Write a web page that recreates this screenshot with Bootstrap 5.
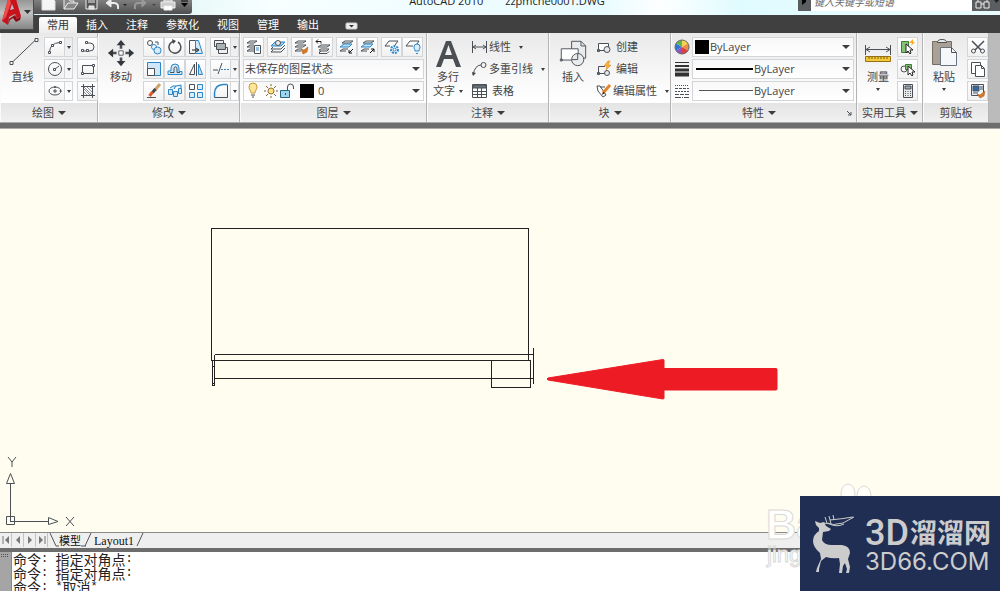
<!DOCTYPE html>
<html lang="zh-CN">
<head>
<meta charset="utf-8">
<meta name="viewport" content="width=device-width, initial-scale=1">
<title>AutoCAD 2010 zzpmche0001.DWG</title>
<link href="https://cdn.jsdelivr.net/npm/bootstrap@5.3.0/dist/css/bootstrap.min.css" rel="stylesheet">
<style>
  body { font: 11px/14px "Open Sans", "Noto Sans CJK SC", sans-serif; color: #444; background: #fff; }
  button, select, input { font: inherit; color: inherit; }
  button { border: 0; padding: 0; background: none; }
  svg { display: block; flex: none; fill: none; stroke: #4b5056; stroke-width: 1; overflow: visible; }

  /* title bar */
  .titlebar { height: 15px; background: linear-gradient(90deg, #e6f6fb, #d8f1f8 8%, #c9ecf5 12%, #eafaf9 20%, #f7ffff 27%, #e8fbff 60%, #fdffff 66%, #e0fbff 74%, #e9fdff); }
  .quickbar { height: 14px; margin-left: 33px; width: 159px; padding-left: 8px; background: linear-gradient(#808080, #4e4e4e); border-radius: 0 0 3px 0; }
  .quickbar svg { stroke: #eee; }
  .caption { height: 15px; padding-bottom: 7px; color: #222; white-space: pre; gap: 22px; }
  .searchbox { height: 11px; width: 202px; background: #5b5e60; }
  .searchbox input { width: 161px; height: 18px; border: 0; padding: 0 3px; font-size: 10px; font-style: italic; background: #fff; border-radius: 0; }
  .searchbox input::placeholder { color: #6b6b6b; opacity: 1; }
  .appmenu { left: 0; top: 0; width: 34px; height: 30px; background: linear-gradient(#969696, #c1c1c1 45%, #858585); border: solid #4c4c4c; border-width: 0 1px 1px 0; z-index: 2; }

  /* ribbon */
  .menubar { height: 18px; padding-left: 39px; background: #404040; }
  .menubar button { height: 16px; padding: 0 9px; color: #fff; }
  .menubar button.current { padding: 0 8px; color: #333; background: linear-gradient(#fff, #ececec); border-radius: 2px 2px 0 0; }
  .ribbon { height: 90px; background: linear-gradient(90deg, #999, #bbb); border-bottom: 1px solid #aaa; }
  .panel { border-right: 1px solid #b4b4b4; border-left: 1px solid #fafafa; background: linear-gradient(#e9e9e9, #fbfbfb 60%, #fff 78%, #e4e4e4 79%, #f1f1f1); }
  .panel-body { height: 70px; padding-top: 4px; }
  .panel-body.tight { padding-left: 2px; padding-right: 2px; }
  .panel-name { height: 19px; }
  .gap-row { gap: 2px; }
  .gap-tool { gap: 3px; }
  .line { height: 20px; }
  .tool { width: 21px; height: 20px; border: 1px solid #d3d6d8; background: linear-gradient(#fff, #f1f1f1); display: flex; align-items: center; justify-content: center; }
  .more { width: 8px; height: 20px; border: 1px solid #d3d6d8; border-left: 0; display: flex; align-items: center; justify-content: center; }
  .big { display: flex; flex-direction: column; align-items: center; height: 64px; }
  .big svg.art { width: 32px; height: 32px; margin-bottom: 1px; }
  .tri { display: inline-block; border: solid transparent; border-width: 4px 4px 0; border-top-color: #3c3c3c; }
  .tri-s { display: inline-block; border: solid transparent; border-width: 3px 2px 0; border-top-color: #3c3c3c; }
  .combo { height: 20px; border: 1px solid #d3d6d8; background: linear-gradient(#f8f8f8, #fff); }
  .combo select { appearance: none; border: 0; padding: 0 16px 0 1px; background: none; flex: 1; min-width: 0; height: 18px; line-height: 18px; }
  .combo .tri { margin: 0 3px 0 -11px; pointer-events: none; }
  .prop .line { gap: 2px; }
  .swatch { width: 14px; height: 14px; background: #000; }
  .prop .swatch { margin-left: 2px; }
  .divider { height: 6px; background: #6d6d6d; border-bottom: 1px solid #aaa; }

  .w-draw { width: 98px; } .w-modify { width: 142px; } .w-layer { width: 187px; } .w-note { width: 122px; }
  .w-block { width: 122px; } .w-prop { width: 186px; } .w-util { width: 66px; } .w-clip { width: 66px; }

  /* drawing area */
  .model { background: #fffdf0; min-height: 0; }
  .sheet { left: 0; top: 0; stroke: #222; }
  .ucs { left: 0; bottom: 0; }
  .layouts { height: 16px; background: #efefef; border-top: 1px solid #8a8a8a; color: #111; }
  .layouts .step { width: 12px; height: 14px; border-right: 1px solid #c4c4c4; display: flex; align-items: center; justify-content: center; }
  .layouts .step svg { fill: #777; stroke: #777; }
  .layouts .sheet-name { font-family: "Liberation Serif", serif; font-size: 12px; }
  .dock-edge { height: 4px; background: #6d6d6d; }
  .console { height: 39px; background: #fff; }
  .console .grip { width: 12px; background: #a5a5a5; border-right: 1px solid #888; }
  .console .log { font: 14px/14px "Noto Sans CJK SC", sans-serif; color: #222; padding-left: 1px; }
  .console .entry { display: flex; height: 14px; }
  .console .mono { font: 12px/14px "Liberation Mono", monospace; white-space: pre; }

  /* watermark and brand */
  .ghost { right: 144px; bottom: 12px; width: 90px; height: 100px; }
  .brand { right: 0; bottom: 0; width: 200px; height: 95px; background: #202e54; color: #ccc; padding: 18px 11px 0 11px; }
  .brand .deer { fill: #ccc; stroke: #ccc; }
  .brand .row-a { height: 34px; font: 700 27px/36px "Noto Sans CJK SC", sans-serif; }
  .brand .row-a .latin { font: 500 36px/38px Roboto, sans-serif; margin-right: 1px; }
  .brand .row-b { font: 24px/28px Inter, sans-serif; }
</style>
</head>
<body class="vh-100 d-flex flex-column overflow-hidden position-relative">

<button class="appmenu position-absolute" aria-label="应用程序菜单">
  <svg width="33" height="29" viewBox="0 0 33 29" style="stroke:none">
    <path d="M2 21 9-4h6l6 20-4 3-2-5-6 3-1 8z" fill="#c9131c"/><path d="M2 21 9-4l2 7-5 14z" fill="#f04b4b"/>
    <path d="M10 10l2-6 2 5z" fill="#bbb"/><path d="M2 21l6 4 1-6 6-4 2 4 4-3-1 4-4 2-3-4-3 2-2 5z" fill="#8e0c12"/>
    <path d="M24 10h7l-3.500 4z" fill="#333"/>
  </svg>
</button>

<header class="titlebar d-flex justify-content-between align-items-start overflow-hidden flex-shrink-0">
  <div class="quickbar d-flex">
    <button aria-label="新建"><svg width="21" height="14"><path d="M1-3h9l4 4v9H1z" fill="#f5f5f5" stroke="#ddd"/></svg></button>
    <button aria-label="打开"><svg width="21" height="14"><path d="M2 9V-1h5l1 2h4v2M2 9l4-6h10l-4 6z" fill="#888"/></svg></button>
    <button aria-label="保存"><svg width="21" height="14"><path d="M3-2h11V9H3z" fill="#555"/><path d="M5 0h7M5 2h7M6 9V6h5v3z" fill="#ddd"/></svg></button>
    <button aria-label="放弃"><svg width="28" height="14"><path d="M5 3h5q5 0 4 6" stroke-width="2"/><path d="M7-1 2 3l5 4z" fill="#eee"/><path d="M19 4h4l-2 2z" fill="#222" stroke="none"/></svg></button>
    <button aria-label="重做"><svg width="28" height="14"><path d="M11 3H6q-4 0-3 6" stroke="#999" stroke-width="2"/><path d="M10-1l4 4-4 4z" fill="#999" stroke="#999"/><path d="M20 4h4l-2 2z" fill="#444" stroke="none"/></svg></button>
    <button aria-label="打印"><svg width="21" height="14"><path d="M4 2v-5h8v5M1 2h14v6H1z" fill="#ccc"/><path d="M4 6h8v4H4z" fill="#fff"/></svg></button>
    <button aria-label="自定义"><svg width="10" height="14"><path d="M0 1h7" stroke="#000"/><path d="M0 3h7l-3.500 4z" fill="#000" stroke="none"/></svg></button>
  </div>
  <div class="caption d-flex align-items-end ms-4"><span>AutoCAD 2010</span><span>zzpmche0001.DWG</span></div>
  <div class="searchbox d-flex align-items-end">
    <svg width="13" height="11"><path d="M4 0v5l4-3V0z" fill="#000" stroke="none"/></svg>
    <input type="text" placeholder="键入关键字或短语" aria-label="搜索">
    <button aria-label="查找"><svg width="28" height="11"><path d="M4 2h5v6H4zM12 2h5v6h-5zM6 2v-3M15 2v-3M9 4h3" fill="#555" stroke="#eee"/><path d="M22 0h5l-2.500 3z" fill="#222" stroke="none"/></svg></button>
  </div>
</header>

<nav class="menubar d-flex align-items-end flex-shrink-0">
  <button class="current">常用</button><button>插入</button><button>注释</button><button>参数化</button><button>视图</button><button>管理</button><button>输出</button>
  <button class="ms-2" aria-label="最小化功能区"><svg width="12" height="15"><rect x="1" y="5" width="11" height="6" rx="1" fill="#eee" stroke="#ccc"/><path d="M4 7h5L6.500 9.500z" fill="#333" stroke="none"/></svg></button>
</nav>

<main class="ribbon d-flex flex-shrink-0">

  <section class="panel w-draw">
    <div class="panel-body d-flex">
      <button class="big ms-1 me-1"><svg class="art" width="32" height="32" viewBox="0 0 32 32" style="width:35px"><path d="M6 25 29 3"/><path d="M3.500 24.500h3v3h-3zM28.500 1.500h3v3h-3z" fill="#fff"/></svg>直线</button>
      <div class="d-flex flex-column gap-row">
        <div class="line d-flex"><button class="tool" aria-label="圆弧"><svg width="16" height="16"><path d="M2.500 13Q3 4 13 3.500"/><path d="M1.500 12.500h2v2h-2zM4.500 5.500h2v2h-2zM12.500 2.500h2v2h-2z" fill="#fff"/></svg></button><button class="more me-1" aria-label="圆弧选项"><i class="tri-s"></i></button><button class="tool" aria-label="多段线"><svg width="16" height="16"><path d="M2 12h8a4 4 0 0 0 0-8H6"/><path d="M1.500 10.500h2v2h-2zM6.500 10.500h2v2h-2zM5.500 2.500h2v2h-2z" fill="#fff"/></svg></button></div>
        <div class="line d-flex"><button class="tool" aria-label="圆"><svg width="16" height="16"><circle cx="8" cy="8" r="6.500"/><path d="m8 8 4-3"/><path d="M6.500 7.500h2v2h-2z" fill="#fff"/></svg></button><button class="more me-1" aria-label="圆选项"><i class="tri-s"></i></button><button class="tool" aria-label="矩形"><svg width="16" height="16"><path d="M2.500 4.500h11v8h-11z"/><path d="M1.500 11.500h2v2h-2zM12.500 3.500h2v2h-2z" fill="#fff"/></svg></button></div>
        <div class="line d-flex"><button class="tool" aria-label="椭圆"><svg width="16" height="16"><ellipse cx="8" cy="8" rx="6" ry="4"/><path d="M7.500 3.500h1v1h-1zM13 7.500h1v1h-1zM6 8h4M8 6v4"/></svg></button><button class="more me-1" aria-label="椭圆选项"><i class="tri-s"></i></button><button class="tool" aria-label="图案填充"><svg width="16" height="16"><path d="M3.500 1v14M12.500 1v14M1 3.500h14M1 12.500h14"/><path d="m4 9 3 3M4 6l6 6M4 4l8 8M7 4l5 5M10 4l2 2" stroke="#8b9095"/></svg></button></div>
      </div>
    </div>
    <div class="panel-name d-flex align-items-center justify-content-center">绘图<i class="tri ms-1"></i></div>
  </section>

  <section class="panel w-modify">
    <div class="panel-body d-flex">
      <button class="big ms-1 me-1 ps-1 pe-1"><svg class="art" width="32" height="32" viewBox="0 0 32 32" style="width:28px"><path d="M16 4v7M16 21v7M4 16h7M21 16h7" stroke-width="3"/><path d="M16 1l-5 6h10zM16 31l-5-6h10zM1 16l6-5v10zM31 16l-6-5v10z" fill="#34383c" stroke="none"/><path d="M13.500 13.500h5v5h-5z" fill="#fff"/></svg>移动</button>
      <div class="d-flex flex-column gap-row">
        <div class="line d-flex"><button class="tool" aria-label="复制"><svg width="16" height="16"><circle cx="4" cy="4" r="2.500"/><path d="M9 3h3v3"/><circle cx="8" cy="8" r="2.500" stroke="#2b87c8"/><circle cx="11.500" cy="11.500" r="3.500" stroke="#2b87c8" fill="#d5ebfa"/></svg></button><button class="tool" aria-label="旋转"><svg width="16" height="16"><path d="M7 2.200a6 6 0 1 0 4 .8" stroke-width="1.500"/><path d="m5 0 4 2-3 3z" fill="#444" stroke="none"/></svg></button><button class="tool me-1" aria-label="拉伸"><svg width="16" height="16"><path d="M1.500 1.500h6v13h-6z"/><path d="M7.500 1.500h3l4 13h-7z" stroke="#2b87c8" fill="#cfe8f9"/><path d="M4 11h6M8 9l3 2-3 2" stroke="#222"/></svg></button><button class="tool" aria-label="前置"><svg width="16" height="16"><path d="M1.500 1.500h9v6h-9zM5.500 8.500h9v6h-9z" fill="#eee"/><path d="M3.500 4.500h9v6h-9z" fill="#a9b0b6"/></svg></button><button class="more" aria-label="排序选项"><i class="tri-s"></i></button></div>
        <div class="line d-flex"><button class="tool" aria-label="缩放"><svg width="16" height="16"><path d="M1.500 1.500h13v13h-13z" stroke="#2b87c8" fill="#cfe8f9"/><path d="M1.500 7.500h7v7h-7z" fill="#fff"/></svg></button><button class="tool" aria-label="偏移"><svg width="16" height="16"><path d="M1 13.500h14v-3h-3V7a4 4 0 0 0-8 0v3H1z" stroke="#2b87c8" fill="#cfe8f9"/><path d="M3 11.500h4V7.500a1.500 1.500 0 0 1 3 0v4h3"/></svg></button><button class="tool me-1" aria-label="镜像"><svg width="16" height="16"><path d="M6.500 3v10.500h-5z"/><path d="M8.500 1v14"/><path d="M10.500 3v10.500h4z" fill="#bfe0f6" stroke="#2b87c8"/></svg></button><button class="tool" aria-label="修剪"><svg width="16" height="16"><path d="M0 9h5M5 13l4-11"/><path d="M8 8.500h2m1 0h2m1 0h2" stroke="#2b87c8"/></svg></button><button class="more" aria-label="修剪选项"><i class="tri-s"></i></button></div>
        <div class="line d-flex"><button class="tool" aria-label="删除"><svg width="16" height="16"><path d="M14 1 9 7" stroke="#c9a36a" stroke-width="3"/><path d="m9.500 6-3 3.500" stroke="#444" stroke-width="3"/><path d="m6.500 9-3 4" stroke="#e0592a" stroke-width="3"/><path d="M1 14.500h9"/></svg></button><button class="tool" aria-label="分解"><svg width="16" height="16"><path d="M1.500 6.500h4v5h-4zM6.500 8.500h4v5h-4zM11.500 5.500h3v5h-3zM3 5l3-2h3L7 6M9 3l5-1v3" stroke="#2b87c8" fill="#cfe8f9"/></svg></button><button class="tool me-1" aria-label="阵列"><svg width="16" height="16"><path d="M1.500 1.500h5v5h-5z"/><path d="M9.500 1.500h5v5h-5zM1.500 9.500h5v5h-5zM9.500 9.500h5v5h-5z" stroke="#2b87c8" fill="#d9edfa"/></svg></button><button class="tool" aria-label="圆角"><svg width="16" height="16"><path d="M14.500 1.500v13h-13v-4"/><path d="M1.500 14V10Q2 2 10 1.500h4" stroke="#2b87c8" stroke-width="1.500"/></svg></button><button class="more" aria-label="圆角选项"><i class="tri-s"></i></button></div>
      </div>
    </div>
    <div class="panel-name d-flex align-items-center justify-content-center">修改<i class="tri ms-1"></i></div>
  </section>

  <section class="panel w-layer">
    <div class="panel-body tight d-flex flex-column gap-row">
      <div class="line d-flex gap-tool">
        <button class="tool" aria-label="图层特性"><svg width="16" height="16"><path d="m1 4 3-2h7L8 4zM1 8l3-2h4M1 12l3-2h4M1 12h7M1 8h7"/><path d="M8.500 6.500h6v8h-6z" fill="#fff"/><path d="M10 9h3M10 11h3" stroke="#2b87c8"/></svg></button>
        <button class="tool" aria-label="置为当前"><svg width="16" height="16"><path d="m1 7 4-4h10l-4 4z" fill="#9fd0f0" stroke="#2b87c8"/><circle cx="8" cy="4" r="2.500" fill="#eee"/><path d="M1 10h10l4-4M1 13h10l4-4M1 10l2-2M1 13l2-2"/></svg></button>
        <div class="d-flex"><button class="tool" aria-label="匹配"><svg width="16" height="16"><path d="m1 4 3-2h8L9 4zM1 8l3-2h8L9 8zM1 12l3-2h4M1 12h6"/><path d="m7 10 3 1 4-3-1 5-4 2z" fill="#d67a25" stroke="#a8521a" stroke-width=".5"/></svg></button><button class="tool" aria-label="上一个"><svg width="16" height="16"><path d="m3 8 3-2h9l-3 2zM4 11l2-1h8l-2 2H4M4 14l2-2M4 14.500h8l2-2"/><path d="M1 2.500h5v2M3 .500l-2 2 2 2" stroke="#222"/></svg></button></div>
        <div class="d-flex"><button class="tool" aria-label="隔离"><svg width="16" height="16"><path d="m3 4 3-2h8l-3 2zM1 12l3-2h5M1 12h6"/><path d="m1 8 4-3h8l-3 3z" stroke="#2b87c8" fill="#bfe0f6"/><path d="m14 10-4 4M10 11v3h3" stroke="#111"/></svg></button><button class="tool" aria-label="取消隔离"><svg width="16" height="16"><path d="m3 4 3-2h8l-3 2zM1 12l3-2h5M1 12h6"/><path d="m1 8 4-3h8l-3 3z" stroke="#2b87c8" fill="#bfe0f6"/><path d="m10 14 4-4M11 10h3v3" stroke="#111"/></svg></button></div>
        <div class="d-flex"><button class="tool" aria-label="冻结"><svg width="16" height="16"><path d="m1 7 4-5h9l-3 4M1 7h5"/><circle cx="10.500" cy="10.500" r="3.500" stroke="#2b87c8" stroke-width="2" stroke-dasharray="2 1"/><circle cx="10.500" cy="10.500" r="1.500" stroke="#2b87c8"/></svg></button><button class="tool" aria-label="关闭"><svg width="16" height="16"><path d="m1 7 4-5h9l-2 3M1 7h7"/><path d="M10 12c0-2-1-2-1-4a3 3 0 0 1 6 0c0 2-1 2-1 4zM11 14.500h2" stroke="#2b87c8" fill="#d9edfa"/></svg></button></div>
      </div>
      <label class="combo d-flex align-items-center"><select aria-label="图层状态"><option>未保存的图层状态</option></select><i class="tri"></i></label>
      <label class="combo d-flex align-items-center">
        <svg width="52" height="18"><path d="M7 11c0-3-2-3-2-6a4 4 0 0 1 8 0c0 3-2 3-2 6z" fill="#ffe59a" stroke="#c39a3c"/><path d="M7 13h4M8 15h2"/><circle cx="27" cy="9" r="3" fill="#ffe08a" stroke="#8a712e"/><path d="M27 2v2M27 14v2M20 9h2M32 9h2M22 4l2 2M32 4l-2 2M22 14l2-2M32 14l-2-2" stroke="#80662a"/><path d="M36.500 8.500h9v7h-9z" fill="#9ed5ee" stroke="#28637e"/><path d="M43.500 8V5a3 3 0 0 1 6 0v2M41.500 11v2"/></svg>
        <span class="swatch ms-1"></span><select class="ps-1" aria-label="图层"><option>0</option></select><i class="tri"></i></label>
    </div>
    <div class="panel-name d-flex align-items-center justify-content-center">图层<i class="tri ms-1"></i></div>
  </section>

  <section class="panel w-note">
    <div class="panel-body d-flex">
      <button class="big ms-1 me-2"><svg class="art" width="32" height="32" viewBox="0 0 32 32"><path d="M4 30 14 4h5l10 26h-5l-3-8h-9l-3 8zM13 18h7l-3.500-10z" fill="#4b4f53" fill-rule="evenodd" stroke="none"/></svg><span>多行</span><span class="d-flex align-items-center">文字<i class="tri-s ms-1"></i></span></button>
      <div class="d-flex flex-column gap-row">
        <button class="line d-flex align-items-center"><svg width="17" height="16"><path d="M.500 2v12M14.500 2v12M1 8h13M4 6 1 8l3 2M11 6l3 2-3 2"/></svg>线性<i class="tri-s ms-2"></i></button>
        <button class="line d-flex align-items-center"><svg width="17" height="16"><path d="M1 14Q3 4 9 4"/><circle cx="11.500" cy="4" r="2.500"/><path d="m0 11 1 4 3-3z" fill="#444" stroke="none"/></svg>多重引线<i class="tri-s ms-2"></i></button>
        <button class="line d-flex align-items-center"><svg class="me-1" width="16" height="16"><path d="M.500 1.500h14v13H.500z" fill="#fff"/><path d="M1 2h13v3H1z" fill="#6a737c"/><path d="M1 8.500h13M1 11.500h13M5.500 5v9M9.500 5v9"/></svg>表格</button>
      </div>
    </div>
    <div class="panel-name d-flex align-items-center justify-content-center">注释<i class="tri ms-1"></i></div>
  </section>

  <section class="panel w-block">
    <div class="panel-body d-flex">
      <button class="big ms-2 me-1 pe-1"><svg class="art" width="32" height="32" viewBox="0 0 32 32" style="width:30px"><path d="M14.500 3.500h10l5 5v13h-15z" fill="#e9ebed"/><path d="M24.500 3.500v5h5"/><path d="M3.500 11.500h18v12h-18z" fill="#fff"/><circle cx="21" cy="23" r="6.500" fill="#e9ebed"/><path d="M21 17v6h-6M2.500 22.500h2v2h-2z"/></svg>插入</button>
      <div class="d-flex flex-column gap-row">
        <button class="line d-flex align-items-center"><svg class="me-1" width="16" height="16"><path d="M2.500 4.500h10v7h-10zM1.500 10.500h2v2h-2z" fill="#fff"/><circle cx="11" cy="10.500" r="3" fill="#e5e8ea"/></svg>创建</button>
        <button class="line d-flex align-items-center"><svg class="me-1" width="16" height="16"><path d="M9 5.500H2.500v7h6M1.500 11.500h2v2h-2z"/><circle cx="11" cy="12" r="2.500" fill="#e5e8ea"/><path d="m12 0-4 5h3l-1 4 5-5h-3l2-4z" fill="#ffb52b" stroke="#cc7b1b" stroke-width=".5"/></svg>编辑</button>
        <button class="line d-flex align-items-center"><svg width="17" height="16"><path d="M4 4h5M1 3l3 0 6 9-3 2-5-6z" fill="#fff"/><path d="m7 10 7-8" stroke="#e0842a" stroke-width="3"/><path d="m6 12 1-3 2 1z" fill="#222" stroke="none"/></svg>编辑属性<i class="tri-s ms-2"></i></button>
      </div>
    </div>
    <div class="panel-name d-flex align-items-center justify-content-center">块<i class="tri ms-1"></i></div>
  </section>

  <section class="panel w-prop">
    <div class="panel-body tight d-flex flex-column gap-row prop">
      <div class="line d-flex">
        <svg width="16" height="20" viewBox="0 0 16 20" style="stroke:none"><path d="M8 10V3a7 7 0 0 1 6 3.500z" fill="#f3d450"/><path d="M8 10l6-3.500a7 7 0 0 1 0 7z" fill="#ef8d3c"/><path d="M8 10l6 3.500A7 7 0 0 1 8 17z" fill="#dd4040"/><path d="M8 10v7a7 7 0 0 1-6-3.500z" fill="#8f54c5"/><path d="M8 10l-6 3.500a7 7 0 0 1 0-7z" fill="#3972ce"/><path d="M8 10 2 6.500A7 7 0 0 1 8 3z" fill="#60b552"/><circle cx="8" cy="10" r="7" stroke="#666"/></svg>
        <label class="combo d-flex align-items-center flex-grow-1"><span class="swatch"></span><select aria-label="颜色"><option>ByLayer</option></select><i class="tri"></i></label>
      </div>
      <div class="line d-flex">
        <svg width="16" height="20"><path d="M1 3.500h14" stroke="#333"/><path d="M1 7h14" stroke="#333" stroke-width="2"/><path d="M1 11h14" stroke="#333" stroke-width="3"/><path d="M1 15.500h14" stroke="#333" stroke-width="4"/></svg>
        <label class="combo d-flex align-items-center flex-grow-1"><svg width="60" height="18"><path d="M3 9h57" stroke="#000" stroke-width="2"/></svg><select aria-label="线宽"><option>ByLayer</option></select><i class="tri"></i></label>
      </div>
      <div class="line d-flex">
        <svg width="16" height="20"><path d="M1 4.500h14" stroke-dasharray="1 1"/><path d="M1 7.500h14" stroke-dasharray="3 1"/><path d="M1 10.500h14" stroke-dasharray="2 1"/><path d="M1 13.500h14" stroke-dasharray="4 1"/><path d="M1 16.500h14" stroke-dasharray="6 1 1 1"/></svg>
        <label class="combo d-flex align-items-center flex-grow-1"><svg width="60" height="18"><path d="M6 8.500h54" stroke="#555"/></svg><select aria-label="线型"><option>ByLayer</option></select><i class="tri"></i></label>
      </div>
    </div>
    <div class="panel-name d-flex align-items-center"><span class="flex-grow-1 d-flex align-items-center justify-content-center">特性<i class="tri ms-1"></i></span><button class="me-1" aria-label="特性选项板"><svg width="6" height="6"><path d="m1 1 4 4M5 2v3H2"/></svg></button></div>
  </section>

  <section class="panel w-util">
    <div class="panel-body d-flex justify-content-between">
      <button class="big ms-1"><svg class="art" width="32" height="32" viewBox="0 0 32 32"><path d="M3.500 8v10M28.500 8v10M4 12.500h24M8 10l-4 2.500L8 15M24 10l4 2.500-4 2.500"/><path d="M3.500 19.500h25v5h-25z" fill="#f4c936" stroke="#967019"/><path d="M7 20v2m3-2v2m3-2v2m3-2v2m3-2v2m3-2v2m3-2v2" stroke="#7c5c10"/></svg>测量<i class="tri-s mt-1"></i></button>
      <div class="d-flex flex-column gap-row me-1">
        <button class="tool" aria-label="快速选择"><svg width="16" height="16"><path d="M1.500 2.500h7v11h-7z" fill="#86bf78" stroke="#3c7d33"/><path d="m6 5 0 9 2-2 2 3 1-1-1-3h3z" fill="#fff" stroke="#222"/><path d="m13 0-4 4h3l-1 3 4-4h-2z" fill="#ffa928" stroke="none"/></svg></button>
        <button class="tool" aria-label="全部选择"><svg width="16" height="16"><circle cx="4" cy="8" r="3"/><path d="M5.500 3.500h6v5h-6z" fill="#86bf78" stroke="#3c7d33"/><path d="m8 5 0 9 2-2 2 3 1-1-1-3h3z" fill="#fff" stroke="#222"/></svg></button>
        <button class="tool" aria-label="计算器"><svg width="16" height="16"><path d="M3.500 1.500h9v13h-9z" fill="#ececec"/><path d="M5 3h6v3H5z" fill="#9ab"/><path d="M5 8.500h6M5 10.500h6M5 12.500h6" stroke-dasharray="1 1.500"/></svg></button>
      </div>
    </div>
    <div class="panel-name d-flex align-items-center justify-content-center">实用工具<i class="tri ms-1"></i></div>
  </section>

  <section class="panel w-clip">
    <div class="panel-body d-flex justify-content-between">
      <button class="big ms-1"><svg class="art" width="32" height="32" viewBox="0 0 32 32"><path d="M4.500 4.500h19v23h-19z" fill="#aaa096" stroke="#776d63"/><path d="M9.500 5.500q0-3 4.500-3t4.500 3z" fill="#eee"/><path d="M12.500 10.500h11l5 5v13h-16z" fill="#f5f7fa" stroke="#6a7480"/><path d="M23.500 10.500v5h5"/></svg>粘贴<i class="tri-s mt-1"></i></button>
      <div class="d-flex flex-column gap-row">
        <button class="tool" aria-label="剪切"><svg width="16" height="16"><path d="m2 2 9 9M14 2 5 11" stroke-width="1.500"/><circle cx="3.500" cy="12" r="2"/><circle cx="12.500" cy="12" r="2"/></svg></button>
        <button class="tool" aria-label="复制剪裁"><svg width="16" height="16"><path d="M1.500 1.500h9v11h-9z" fill="#fff"/><path d="M5.500 4.500h6l3 3v8h-9z" fill="#fff"/><path d="M11.500 4.500v3h3"/></svg></button>
        <button class="tool" aria-label="特性匹配"><svg width="16" height="16"><path d="M1.500 1.500h12v11h-12z" fill="#edf4fa"/><path d="M3 3h6v5H3z" fill="#2f6aa5"/><path d="M10 4h3M10 6h3M3 10h5"/><path d="m7 11 3 1 5-4-1 5-4 2z" fill="#d67a25" stroke="#a8521a" stroke-width=".5"/></svg></button>
      </div>
    </div>
    <div class="panel-name d-flex align-items-center justify-content-center">剪贴板</div>
  </section>
</main>
<div class="divider flex-shrink-0"></div>

<section class="model flex-grow-1 position-relative overflow-hidden">
  <svg class="sheet position-absolute" width="800" height="300" shape-rendering="crispEdges">
    <path d="M211.500 231.500V99.500H528.500V231.500M214.500 225.500H533M211.500 231.500H530.500M214.500 249.500H533M214.500 225.500V257M212.500 232V257M212 237.500h3M212 254.500h3M212 256.500h3M491.500 231.500H530.500V258.500H491.500zM533.500 219v36"/>
    <path d="M548 249 663 230.500q1 0 1 1V239.500H776q1 0 1 1V260q0 1-1 1H664v8q0 1-1 1L548 251q-2-1 0-2z" fill="#ed1c24" stroke="#ed1c24" shape-rendering="auto"/>
  </svg>
  <svg class="ucs position-absolute" width="90" height="80" viewBox="0 0 90 80" stroke="#222">
    <path d="M6.500 64.500h8v8h-8zM10.500 69V32M10 69.500H48M6.500 31.500h8L10.500 21.500zM48.500 65.500v7L58 69.500z"/>
    <path d="M8 5l4 5 4-5M12 10v5M66 65l8 9M74 65l-8 9"/>
  </svg>
</section>

<div class="layouts d-flex flex-shrink-0">
  <button class="step" aria-label="第一个"><svg width="8" height="8"><path d="M1 0v8"/><path d="M7 0v8L3 4z" stroke="none"/></svg></button>
  <button class="step" aria-label="上一个布局"><svg width="6" height="8"><path d="M5 0v8L1 4z" stroke="none"/></svg></button>
  <button class="step" aria-label="下一个布局"><svg width="6" height="8"><path d="M1 0v8l4-4z" stroke="none"/></svg></button>
  <button class="step" aria-label="最后一个"><svg width="8" height="8"><path d="M7 0v8"/><path d="M1 0v8l4-4z" stroke="none"/></svg></button>
  <svg width="11" height="14"><path d="m2 0 6 13h3" stroke="#555"/></svg>
  <button>模型</button>
  <svg width="13" height="14"><path d="M4 13 10 0M0 13h5" stroke="#555"/></svg>
  <button class="sheet-name">Layout1</button>
  <svg width="14" height="14"><path d="m3 13 6-13" stroke="#555"/></svg>
</div>
<div class="dock-edge flex-shrink-0"></div>

<section class="console d-flex overflow-hidden flex-shrink-0">
  <div class="grip"><svg width="12" height="6"><path d="M1 2.500h8M1 4.500h8" stroke="#555" stroke-dasharray="1 1"/></svg></div>
  <div class="log">
    <div class="entry">命令<span class="mono">: </span>指定对角点<span class="mono">:</span></div>
    <div class="entry">命令<span class="mono">: </span>指定对角点<span class="mono">:</span></div>
    <div class="entry">命令<span class="mono">: *</span>取消<span class="mono">*</span></div>
  </div>
</section>

<svg class="ghost position-absolute" viewBox="0 0 90 100" fill="#fff" style="stroke:#d9d9d6">
  <ellipse cx="82" cy="15" rx="7" ry="10" fill="#fffef8"/><ellipse cx="98" cy="17" rx="7" ry="10" fill="#fffef8"/>
  <text x="0" y="60" font-family="Liberation Sans" font-weight="bold" font-size="42" fill="#fff">Ba</text>
  <text x="1" y="83" font-family="Liberation Sans" font-size="22" fill="#fff">jing</text>
</svg>

<aside class="brand position-absolute d-flex">
  <svg class="deer" width="54" height="60" viewBox="0 0 54 60">
    <path d="M4 7l5 2 4-1 2 4 5 3-2 2-6 1-1 8q2 5 10 5h10q8 1 8 8l-2 6 2 8-1 6h-3l1-4-2-6-2 3-1 7h-3l1-9-1-6q-7 1-13-1l-5 4-2 8v3H5l1-4 4-9-1-6Q2 33 2 27q0-6 6-10l0-3-3-3z" stroke="none"/>
    <path d="M13 9Q23 12 32 9L43 3M16 9 14 3M20 10 18 2M23 6 22 1M19 6Q30 5 42 3M17 9q8 5 16 1" stroke-width="1" fill="none"/>
  </svg>
  <div class="text-nowrap">
    <div class="row-a d-flex"><span class="latin">3D</span>溜溜网</div>
    <div class="row-b">3D66.COM</div>
  </div>
</aside>

<script src="https://cdn.jsdelivr.net/npm/bootstrap@5.3.0/dist/js/bootstrap.bundle.min.js"></script>
</body>
</html>
